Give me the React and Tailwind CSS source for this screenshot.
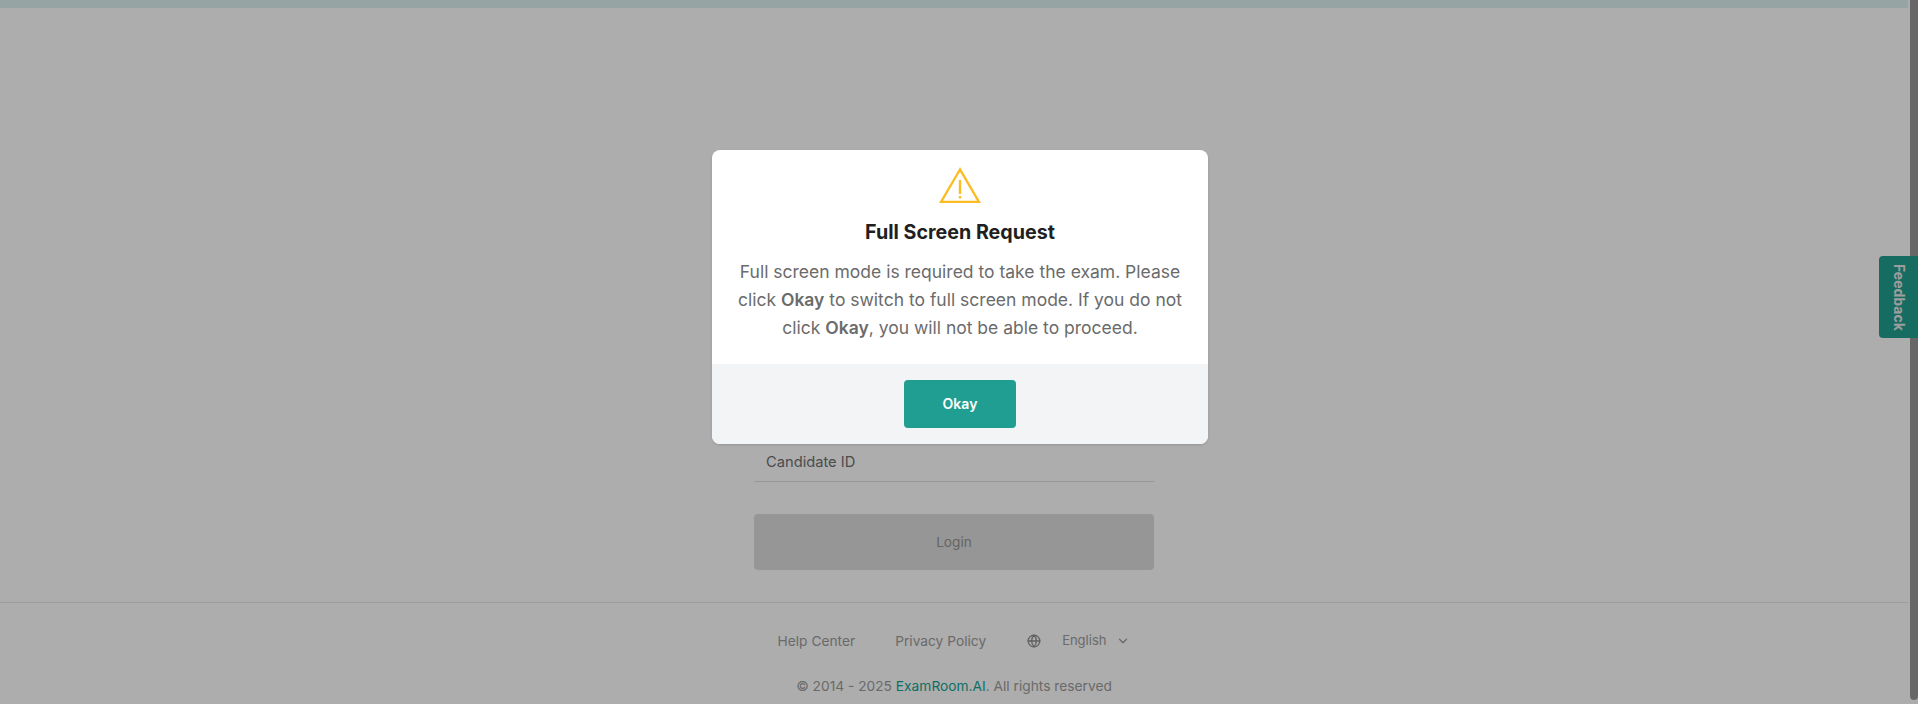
import { ChevronDown, Globe } from 'lucide-react';

const App = () => {
  return (
    <div className="relative flex h-screen w-full overflow-hidden bg-white font-['Inter',sans-serif]">
      <div className="flex min-w-0 flex-1 flex-col">
        <div className="h-2 shrink-0 bg-[#def2f2]"></div>

        {/* Login form, mostly behind the modal */}
        <main className="flex flex-1 flex-col justify-end pb-[32px]">
          <div className="mx-auto w-[400px]">
            <div className="flex h-[38px] items-center border-b border-[#dfdfdf] px-3 text-[14.7px] text-[#707070]">
              Candidate ID
            </div>
            <button className="mt-8 flex h-14 w-full items-center justify-center rounded bg-[#dedede] text-[13.7px] text-[#949494]">
              Login
            </button>
          </div>
        </main>

        {/* Footer */}
        <footer className="h-[102px] shrink-0 border-t border-[#e8e8e8] pt-[28px] text-[13.75px] text-[#9c9c9c]">
          <div className="flex h-5 items-center justify-center">
            <a>Help Center</a>
            <a className="ml-10">Privacy Policy</a>
            <Globe size={14} strokeWidth={2.2} className="ml-[41px] text-[#8c8c8c]" />
            <span className="ml-[21px] -mt-[1px] text-[13px]">English</span>
            <ChevronDown size={14} strokeWidth={2.2} className="ml-[10px]" />
          </div>
          <p className="mt-[25px] text-center leading-5">
            © 2014 - 2025 <span className="text-[#14a594]">ExamRoom.AI</span>. All rights reserved
          </p>
        </footer>
      </div>

      {/* Scrollbar */}
      <div className="flex w-[10px] shrink-0 justify-end">
        <div className="h-[700px] w-2 rounded-b bg-[#999]"></div>
      </div>

      {/* Feedback tab */}
      <div className="absolute right-0 top-[256px] flex h-[82px] w-[39px] items-center justify-center rounded-l bg-[#229f90] text-sm font-bold text-[#e8e8e8] [writing-mode:vertical-rl]">
        Feedback
      </div>

      {/* Overlay and modal */}
      <div className="absolute inset-0 flex items-start justify-center bg-black/32 pl-[2px] pt-[150px]">
        <div className="w-[496px] overflow-hidden rounded-lg bg-white shadow-sm">
          <div className="flex h-[214px] flex-col items-center px-4 pt-[17px] text-center">
            <svg width="42" height="36" viewBox="0 0 42 36" fill="none" stroke="#fbbc24" strokeWidth="2.4">
              <path d="M21 2.5 L2 35 H40 Z" />
              <path d="M21 13 V27" />
              <path d="M21 29 V31.5" />
            </svg>
            <h2 className="mt-[15px] text-[19.7px] leading-7 font-bold text-[#1f1f1f]">Full Screen Request</h2>
            <p className="mt-[12px] text-[17.5px] leading-7 text-[#6b6b6b]">
              Full screen mode is required to take the exam. Please click <b className="font-semibold">Okay</b> to switch to full screen mode. If you do not click <b className="font-semibold">Okay</b>, you will not be able to proceed.
            </p>
          </div>
          <div className="flex h-20 items-start justify-center bg-[#f3f4f6] pt-4">
            <button className="h-12 w-28 rounded bg-[#209e91] text-sm font-semibold text-white">Okay</button>
          </div>
        </div>
      </div>
    </div>
  );
};

export default App;
